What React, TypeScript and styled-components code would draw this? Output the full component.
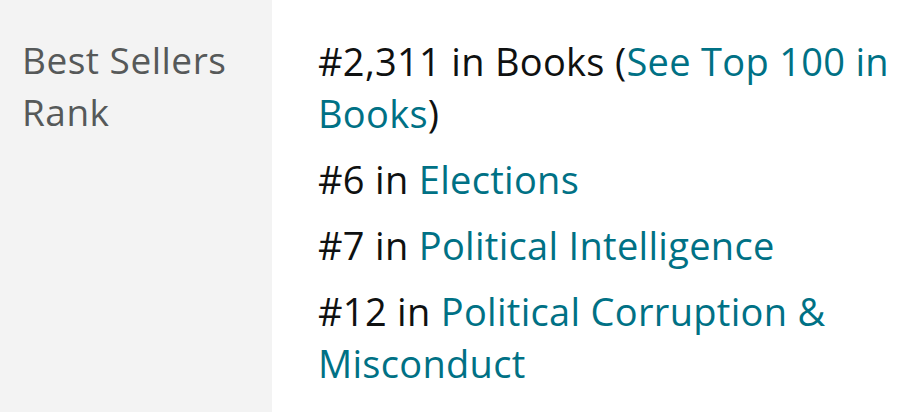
import React from "react";
import styled, { createGlobalStyle } from "styled-components";

const Global = createGlobalStyle`
  html, body { margin: 0; padding: 0; background: #ffffff; }
  body { font-family: "Open Sans", Roboto, sans-serif; }
`;

const Table = styled.div`
  display: grid;
  grid-template-columns: 272px 1fr;
  width: 922px;
  height: 412px;
  overflow: hidden;
`;

const LabelCell = styled.div`
  background: #f3f3f3;
  padding: 34px 20px 0 22px;
  color: #565959;
  font-size: 37px;
  letter-spacing: 0.5px;
  line-height: 52px;
`;

const ValueCell = styled.ul`
  list-style: none;
  margin: 0;
  padding: 35px 12px 0 46px;
  display: flex;
  flex-direction: column;
  gap: 14px;
`;

const Item = styled.li`
  font-size: 38px;
  letter-spacing: 0.3px;
  line-height: 52px;
  color: #0f1111;
`;

const Link = styled.a`
  color: #007185;
  text-decoration: none;
`;

const ranks = [
  { rank: "#6", name: "Elections" },
  { rank: "#7", name: "Political Intelligence" },
  { rank: "#12", name: "Political Corruption & Misconduct" },
];

export default function App() {
  return (
    <>
      <Global />
      <Table>
        <LabelCell>Best Sellers Rank</LabelCell>
        <ValueCell>
          <Item>
            #2,311 in Books (<Link href="#">See Top 100 in Books</Link>)
          </Item>
          {ranks.map((r) => (
            <Item key={r.name}>
              {r.rank} in <Link href="#">{r.name}</Link>
            </Item>
          ))}
        </ValueCell>
      </Table>
    </>
  );
}
